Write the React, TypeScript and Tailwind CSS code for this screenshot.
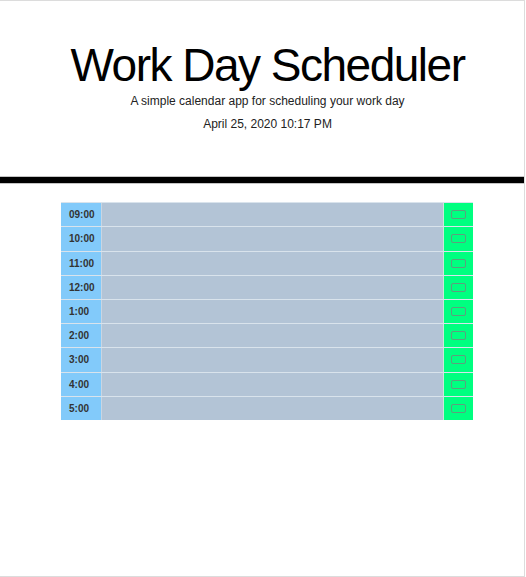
const hours = ["09:00", "10:00", "11:00", "12:00", "1:00", "2:00", "3:00", "4:00", "5:00"];

function TimeBlock({ hour }: { hour: string }) {
  return (
    <div className="flex h-[24.2px] border-t border-[#d9e3ec]">
      <div className="flex w-[40px] items-center bg-[#82cafa] pl-[8px] text-[10px] font-bold text-[#333]">
        {hour}
      </div>
      <textarea
        className="flex-1 resize-none border-l border-[#c9d6e3] bg-[#b3c4d6] outline-none"
        defaultValue=""
      />
      <button className="flex w-[30px] items-center justify-center border-l border-[#c8ead9] bg-[#00ff80]">
        <span className="block h-[9px] w-[15px] rounded-[2px] border border-[#5f9e7e]" />
      </button>
    </div>
  );
}

export default function App() {
  return (
    <div
      className="h-[577px] w-[525px] border-y border-r border-[#dcdcdc] bg-white text-black"
      style={{ fontFamily: '"Liberation Sans", Arial, sans-serif' }}
    >
      <header className="pl-[11px] pt-[37px] text-center">
        <h1 className="text-[46px] leading-[1.2] tracking-[-1.5px]">Work Day Scheduler</h1>
        <p className="-mt-[2px] text-[12px] leading-[20px] text-[#222]">
          A simple calendar app for scheduling your work day
        </p>
        <p className="mt-[3px] text-[12px] leading-[20px] text-[#222]">April 25, 2020 10:17 PM</p>
      </header>
      <div className="mt-[42px] h-[8px] border-y border-[#c4c4c4] bg-black" />
      <main className="pl-[10px] pt-[18px]">
        <div className="mx-auto w-[412px]">
          {hours.map((h) => (
            <TimeBlock key={h} hour={h} />
          ))}
        </div>
      </main>
    </div>
  );
}
